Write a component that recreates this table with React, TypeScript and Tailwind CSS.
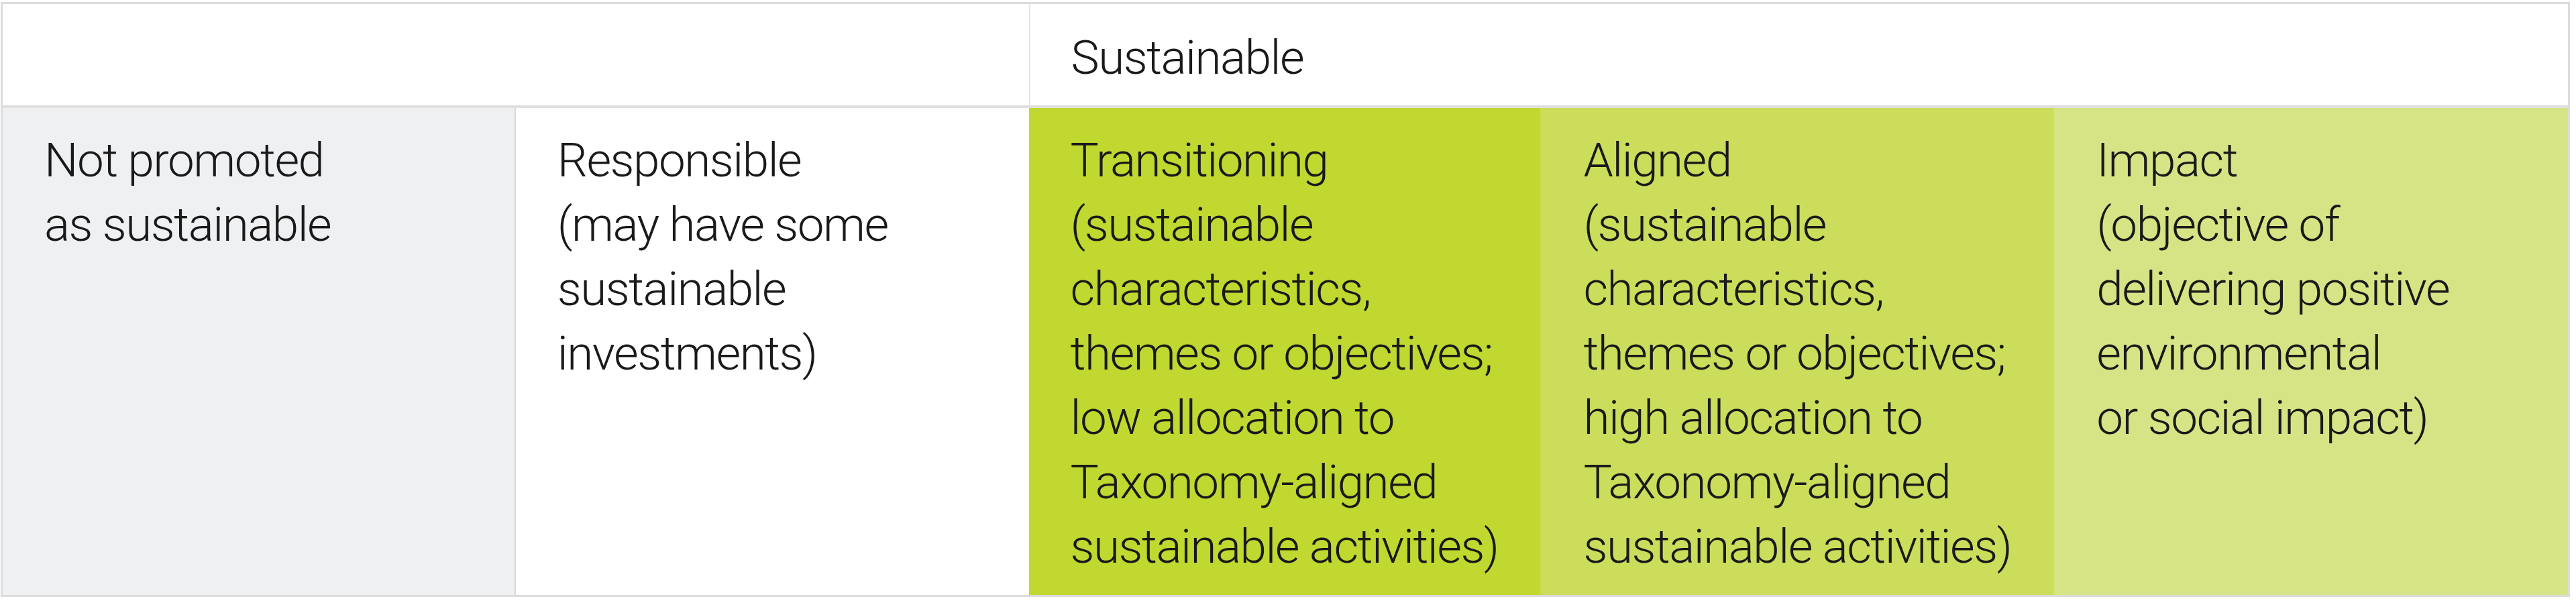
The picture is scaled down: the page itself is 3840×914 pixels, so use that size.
const COLUMNS: { lines: string[]; bg: string; border: string }[] = [
  { lines: ['Not promoted', 'as sustainable'], bg: 'bg-[#eff0f2]', border: 'border-r-2 border-[#d6d7d9]' },
  {
    lines: ['Responsible', '(may have some', 'sustainable', 'investments)'],
    bg: 'bg-white',
    border: '',
  },
  {
    lines: [
      'Transitioning',
      '(sustainable',
      'characteristics,',
      'themes or objectives;',
      'low allocation to',
      'Taxonomy-aligned',
      'sustainable activities)',
    ],
    bg: 'bg-[#c0d82f]',
    border: 'border-r-2 border-[#c9dd52]',
  },
  {
    lines: [
      'Aligned',
      '(sustainable',
      'characteristics,',
      'themes or objectives;',
      'high allocation to',
      'Taxonomy-aligned',
      'sustainable activities)',
    ],
    bg: 'bg-[#cbdd5b]',
    border: 'border-r-2 border-[#d3e274]',
  },
  {
    lines: ['Impact', '(objective of', 'delivering positive', 'environmental', 'or social impact)'],
    bg: 'bg-[#d7e486]',
    border: '',
  },
];

const textClass =
  "font-['Roboto',sans-serif] font-light text-[71px] leading-[96px] tracking-[-1.5px] text-[#1a1a1a] whitespace-nowrap";

export default function App() {
  return (
    <div className="w-[3840px] h-[914px] bg-white pt-[3px] pl-[1px]">
      <div className="w-[3830px] border-[3px] border-[#dcdcdc] bg-white">
        <div className="grid grid-cols-5 h-[155px] border-b-4 border-[#e0e0e0]">
          <div className="col-span-2" />
          <div className={`col-span-3 border-l-2 border-[#e6e6e6] pl-[61px] pt-[32px] ${textClass}`}>
            Sustainable
          </div>
        </div>
        <div className="grid grid-cols-5 h-[726px]">
          {COLUMNS.map((col, i) => (
            <div key={i} className={`${col.bg} ${col.border} pl-[62px] pt-[30px]`}>
              {col.lines.map((line) => (
                <div key={line} className={textClass}>
                  {line}
                </div>
              ))}
            </div>
          ))}
        </div>
      </div>
    </div>
  );
}
